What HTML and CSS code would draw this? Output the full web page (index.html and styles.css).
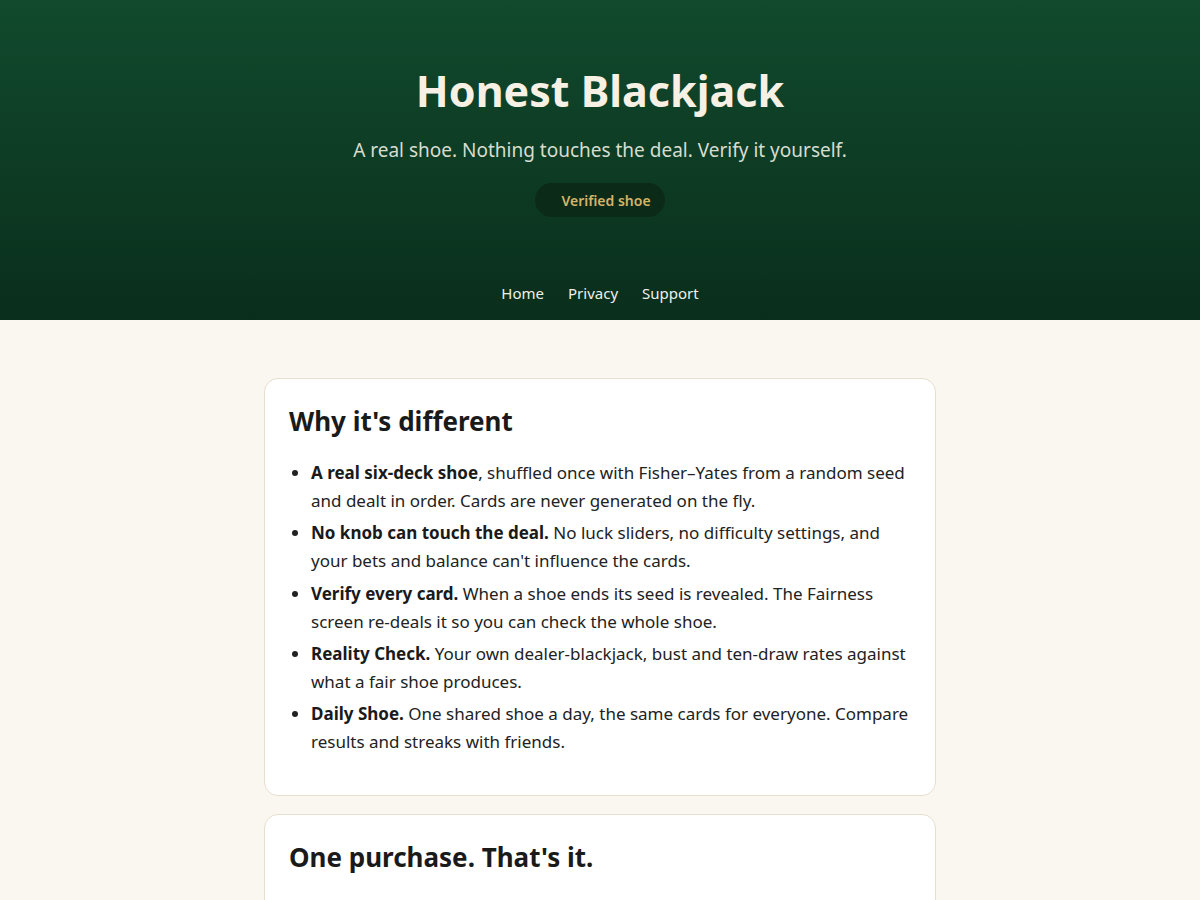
FILE: index.html
```html
<!DOCTYPE html>
<html lang="en">
<head>
<meta charset="utf-8">
<title>Honest Blackjack</title>
<link rel="stylesheet" href="styles.css">
</head>
<body>
<header class="hero">
  <h1 class="hero-title">Honest Blackjack</h1>
  <p class="hero-sub">A real shoe. Nothing touches the deal. Verify it yourself.</p>
  <span class="badge"><span class="badge-dot"></span>Verified shoe</span>
  <nav class="nav">
    <a href="#">Home</a>
    <a href="#">Privacy</a>
    <a href="#">Support</a>
  </nav>
</header>
<main class="main">
  <section class="card">
    <h2 class="card-title">Why it's different</h2>
    <ul class="list">
      <li><strong>A real six-deck shoe</strong>, shuffled once with Fisher–Yates from a random seed and dealt in order. Cards are never generated on the fly.</li>
      <li><strong>No knob can touch the deal.</strong> No luck sliders, no difficulty settings, and your bets and balance can't influence the cards.</li>
      <li><strong>Verify every card.</strong> When a shoe ends its seed is revealed. The Fairness screen re-deals it so you can check the whole shoe.</li>
      <li><strong>Reality Check.</strong> Your own dealer-blackjack, bust and ten-draw rates against what a fair shoe produces.</li>
      <li><strong>Daily Shoe.</strong> One shared shoe a day, the same cards for everyone. Compare results and streaks with friends.</li>
    </ul>
  </section>
  <section class="card">
    <h2 class="card-title">One purchase. That's it.</h2>
    <p class="text">Pay once to unlock the full game. No ads, no subscriptions, no chips to buy, and nothing that changes the odds.</p>
  </section>
</main>
</body>
</html>
```

FILE: styles.css
```css
* { box-sizing: border-box; }
html, body { margin: 0; padding: 0; }
body {
  background: #faf7f0;
  font-family: "Noto Sans", "Open Sans", sans-serif;
  color: #1c1c1c;
}
.hero {
  height: 320px;
  background: linear-gradient(180deg, #114a2d 0%, #0a2e1c 100%);
  display: flex;
  flex-direction: column;
  align-items: center;
  padding-top: 61px;
  color: #f5f0e4;
}
.hero-title {
  margin: 0;
  font-size: 43px;
  font-weight: 700;
  line-height: 60px;
  color: #f6f1e4;
}
.hero-sub {
  margin: 15px 0 0;
  font-size: 19px;
  line-height: 28px;
  color: #d8dccf;
}
.badge {
  margin-top: 19px;
  display: inline-flex;
  align-items: center;
  height: 34px;
  padding: 0 14px 0 18px;
  border-radius: 17px;
  background: #0b2a17;
  color: #d4b468;
  font-size: 14px;
  font-weight: 600;
}
.badge-dot {
  width: 8px;
  height: 8px;
  border-radius: 50%;
  background: #0b2a17;
}
.nav {
  margin-top: 66px;
  display: flex;
  gap: 24px;
}
.nav a {
  color: #eef0e8;
  text-decoration: none;
  font-size: 15px;
  line-height: 20px;
}
.main {
  display: flex;
  flex-direction: column;
  align-items: center;
  gap: 18px;
  padding-top: 58px;
}
.card {
  width: 672px;
  background: #ffffff;
  border: 1px solid #e6dfd0;
  border-radius: 14px;
  padding: 22px 24px 34px;
}
.card-title {
  margin: 0 0 18px;
  font-size: 26px;
  line-height: 40px;
  font-weight: 700;
  color: #1a1a1a;
}
.list {
  margin: 0;
  padding-left: 22px;
}
.list li {
  font-size: 17px;
  line-height: 1.65;
  margin-bottom: 0.25em;
  color: #222;
}
.list strong { font-weight: 700; color: #1a1a1a; }
.text {
  margin: 0;
  font-size: 17px;
  line-height: 28px;
}
```
